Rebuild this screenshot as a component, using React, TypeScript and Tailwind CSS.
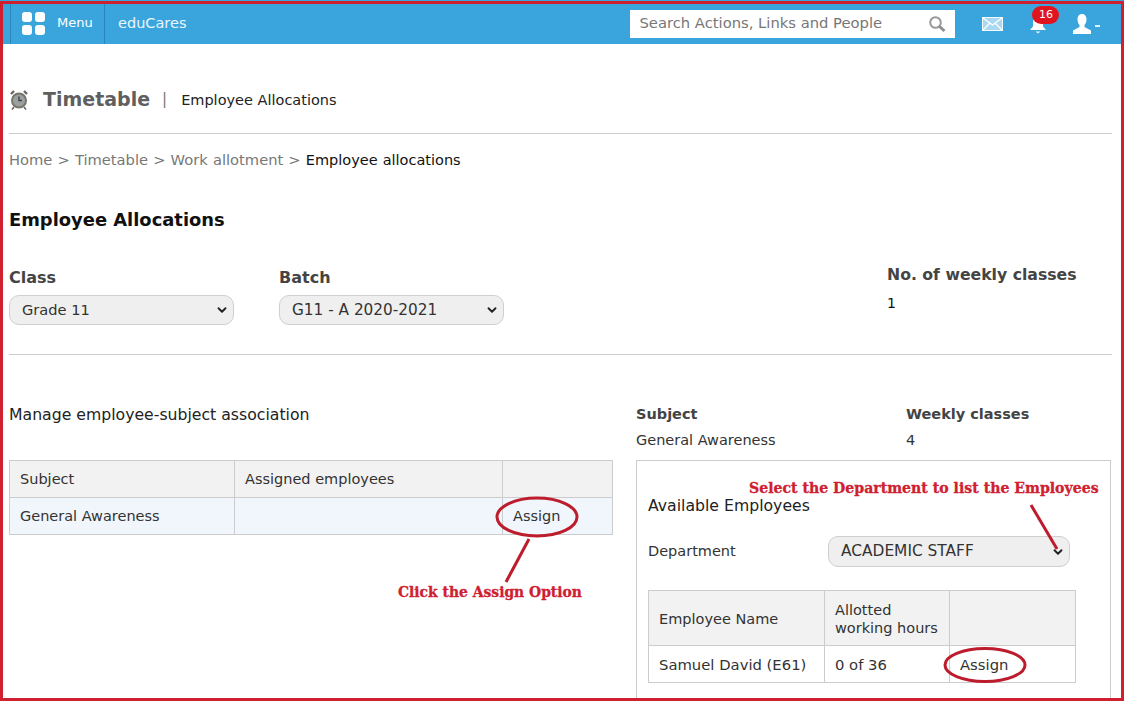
import { ChevronDown } from "lucide-react";

const font = { fontFamily: '"DejaVu Sans", Verdana, sans-serif' };
const anno = { fontFamily: '"DejaVu Serif", "Liberation Serif", serif' };

function FakeSelect({ value, className }: { value: string; className: string }) {
  return (
    <div className={`flex items-center justify-between rounded-[10px] border border-[#cfcfcf] bg-[#efefef] pl-3 pr-[4px] text-[#333] ${className}`}>
      <span>{value}</span>
      <ChevronDown size={14} strokeWidth={3.2} className="text-[#222]" />
    </div>
  );
}

function Clock() {
  return (
    <svg width="20" height="22" viewBox="0 0 20 22" className="mr-[14px]">
      <circle cx="10" cy="11.5" r="7" fill="#9aa0a0" stroke="#77756a" strokeWidth="2" />
      <path d="M10 7.5v4h3" stroke="#444" strokeWidth="1.4" fill="none" />
      <path d="M2 5l3-3M18 5l-3-3" stroke="#666" strokeWidth="2.4" />
      <path d="M5 18l-2 2.5M15 18l2 2.5" stroke="#666" strokeWidth="1.6" />
    </svg>
  );
}

function SearchGlyph() {
  return (
    <svg width="18" height="18" viewBox="0 0 18 18">
      <circle cx="7.5" cy="7.5" r="5.3" fill="none" stroke="#9a9a9a" strokeWidth="2" />
      <path d="M11.5 11.5L16.5 16" stroke="#8e8e8e" strokeWidth="3" />
    </svg>
  );
}

function MailGlyph() {
  return (
    <svg width="21" height="14" viewBox="0 0 21 14">
      <rect x="0.5" y="0.5" width="20" height="13" fill="#a9d8f2" stroke="#f2fafe" />
      <path d="M1 1l9.5 7L20 1M1 13l7-7M20 13l-7-7" fill="none" stroke="#ffffff" strokeWidth="1.2" />
    </svg>
  );
}

function BellGlyph() {
  return (
    <svg width="18" height="18" viewBox="0 0 18 18">
      <path d="M9 1C5.5 1 4 3.5 4 7v3.5L1 14h16l-3-3.5V7c0-3.500-1.500-6-5-6z" fill="#fff" />
      <path d="M6.500 15.500h5L9 17.500z" fill="#e8f5fc" />
    </svg>
  );
}

function UserGlyph() {
  return (
    <svg width="20" height="20" viewBox="0 0 20 20">
      <path d="M10 0C6.800 0 5.500 2.500 5.500 5.500c0 2.500 1 4.300 2 5.500v2L1 16.500V20h18v-3.500L12.500 13v-2c1-1.200 2-3 2-5.500C14.500 2.500 13.200 0 10 0z" fill="#fff" />
    </svg>
  );
}

export default function App() {
  return (
    <div style={font} className="relative h-[701px] w-[1124px] overflow-hidden bg-white text-[#111]">
      <header className="flex h-[44px] items-center bg-[#3aa5dc] pt-[3px] text-white">
        <div className="ml-[10px] flex h-full w-[95px] items-center border-x border-[#2a86ba]">
          <div className="ml-[11px] grid grid-cols-2 gap-[3px]">
            <span className="h-[10px] w-[10px] rounded-[3px] bg-white" />
            <span className="h-[10px] w-[10px] rounded-[3px] bg-white" />
            <span className="h-[10px] w-[10px] rounded-[3px] bg-white" />
            <span className="h-[10px] w-[10px] rounded-[3px] bg-white" />
          </div>
          <span className="mb-[2px] ml-[12px] text-[13px]">Menu</span>
        </div>
        <span className="ml-[13px] mt-[1px] text-[14.5px] text-[#eaf6fc]">eduCares</span>
        <div className="ml-[444px] flex h-[28px] w-[325px] items-center justify-between bg-white pl-[9px] pr-[9px] text-[14.75px] text-[#777]">
          <span>Search Actions, Links and People</span>
          <SearchGlyph />
        </div>
        <span className="ml-[27px] mt-[1px] flex"><MailGlyph /></span>
        <div className="relative ml-[26px] mt-[3px] flex">
          <BellGlyph />
          <span className="absolute -top-[10px] left-[3px] flex h-[18px] w-[27px] items-center justify-center rounded-full bg-[#e0141e] text-[11px] text-white">16</span>
        </div>
        <span className="ml-[25px] flex"><UserGlyph /></span>
        <span className="ml-[3px] mt-[5px] h-[2px] w-[5px] bg-[#dff1fb]" />
      </header>

      <main className="pl-[9px] pr-[12px]">
        <div className="flex h-[90px] items-center border-b border-[#ccc] pt-[22px]">
          <Clock />
          <h1 className="text-[19px] font-bold text-[#5f5f5f]">Timetable</h1>
          <span className="ml-[12px] mr-[14px] text-[15px] text-[#777]">|</span>
          <span className="mt-[2px] text-[14.5px] text-[#222]">Employee Allocations</span>
        </div>

        <div className="mt-[16px] text-[14.7px] leading-[20px] text-[#777] [word-spacing:0.45px]">
          Home &gt; Timetable &gt; Work allotment &gt; <span className="text-[14.5px] text-[#111]">Employee allocations</span>
        </div>

        <h2 className="mt-[38px] text-[17.9px] font-bold leading-[24px] text-[#111]">Employee Allocations</h2>

        <div className="mt-[35px] flex h-[87px]">
          <div className="w-[270px]">
            <div className="text-[16px] font-bold leading-[22px] text-[#444]">Class</div>
            <FakeSelect value="Grade 11" className="mt-[6px] h-[30px] w-[225px] text-[14.6px]" />
          </div>
          <div className="w-[608px]">
            <div className="text-[16px] font-bold leading-[22px] text-[#444]">Batch</div>
            <FakeSelect value="G11 - A 2020-2021" className="mt-[6px] h-[30px] w-[225px] text-[15.3px]" />
          </div>
          <div className="-mt-[3px]">
            <div className="text-[15.7px] font-bold leading-[22px] text-[#444]">No. of weekly classes</div>
            <div className="mt-[7px] text-[14px] leading-[20px]">1</div>
          </div>
        </div>
        <div className="border-b border-[#ccc]" />

        <div className="flex">
          <section className="w-[627px]">
            <div className="mt-[49px] text-[15.7px] leading-[22px] text-[#222]">Manage employee-subject association</div>
            <table className="mt-[34px] w-[603px] table-fixed border-collapse text-[14.5px] text-[#333] [&_td]:pt-[2px]">
              <colgroup>
                <col className="w-[225px]" />
                <col className="w-[268px]" />
                <col className="w-[110px]" />
              </colgroup>
              <tbody>
                <tr className="h-[37px] bg-[#f2f2f2]">
                  <td className="border border-[#ccc] px-[10px]">Subject</td>
                  <td className="border border-[#ccc] px-[10px]">Assigned employees</td>
                  <td className="border border-[#ccc] px-[10px]" />
                </tr>
                <tr className="h-[37px] bg-[#f0f6fc]">
                  <td className="border border-[#ccc] px-[10px]">General Awareness</td>
                  <td className="border border-[#ccc] px-[10px]" />
                  <td className="border border-[#ccc] px-[10px]">Assign</td>
                </tr>
              </tbody>
            </table>
          </section>

          <section className="w-[475px]">
            <div className="mt-[48px] grid grid-cols-[270px_1fr] text-[14.5px] leading-[22px]">
              <div className="font-bold text-[#444]">Subject</div>
              <div className="font-bold text-[#444]">Weekly classes</div>
              <div className="mt-[4px] text-[#333]">General Awareness</div>
              <div className="mt-[4px] text-[#333]">4</div>
            </div>
            <div className="mt-[9px] h-[260px] border border-[#ccc] px-[11px]">
              <div className="mt-[34px] text-[15.7px] leading-[22px] text-[#222]">Available Employees</div>
              <div className="mt-[19px] flex h-[31px] items-center">
                <span className="w-[180px] text-[14.5px] text-[#333]">Department</span>
                <FakeSelect value="ACADEMIC STAFF" className="h-[31px] w-[242px] text-[15.4px]" />
              </div>
              <table className="mt-[23px] w-[427px] table-fixed border-collapse text-[14.5px] text-[#333] [&_td]:pt-[2px]">
                <colgroup>
                  <col className="w-[176px]" />
                  <col className="w-[125px]" />
                  <col className="w-[126px]" />
                </colgroup>
                <tbody>
                  <tr className="h-[55px] bg-[#f2f2f2] leading-[18px]">
                    <td className="border border-[#ccc] px-[10px]">Employee Name</td>
                    <td className="border border-[#ccc] px-[10px]">Allotted<br />working hours</td>
                    <td className="border border-[#ccc] px-[10px]" />
                  </tr>
                  <tr className="h-[37px] text-[14.8px]">
                    <td className="border border-[#ccc] px-[10px]">Samuel David (E61)</td>
                    <td className="border border-[#ccc] px-[10px]">0 of 36</td>
                    <td className="border border-[#ccc] px-[10px]">Assign</td>
                  </tr>
                </tbody>
              </table>
            </div>
          </section>
        </div>
      </main>

      {/* annotations laid over the screenshot */}
      <svg width="1124" height="701" className="pointer-events-none absolute left-0 top-0">
        <rect x="1.5" y="2.500" width="1121" height="697" fill="none" stroke="#cf2030" strokeWidth="3" />
        <ellipse cx="537" cy="517" rx="40" ry="19" fill="none" stroke="#bd1c2c" strokeWidth="3" />
        <path d="M529 539L506 582" stroke="#bd1c2c" strokeWidth="3" />
        <path d="M1031 505L1057 549" stroke="#bd1c2c" strokeWidth="3" />
        <ellipse cx="985" cy="665" rx="40" ry="16.5" fill="none" stroke="#bd1c2c" strokeWidth="3" />
      </svg>
      <span style={anno} className="absolute left-[398px] top-[583px] whitespace-nowrap text-[13.9px] font-bold leading-[18px] text-[#cf2030] [-webkit-text-stroke:0.3px_#cf2030]">Click the Assign Option</span>
      <span style={anno} className="absolute left-[749px] top-[479px] whitespace-nowrap text-[14.1px] font-bold leading-[18px] text-[#cf2030] [-webkit-text-stroke:0.3px_#cf2030]">Select the Department to list the Employees</span>
    </div>
  );
}
